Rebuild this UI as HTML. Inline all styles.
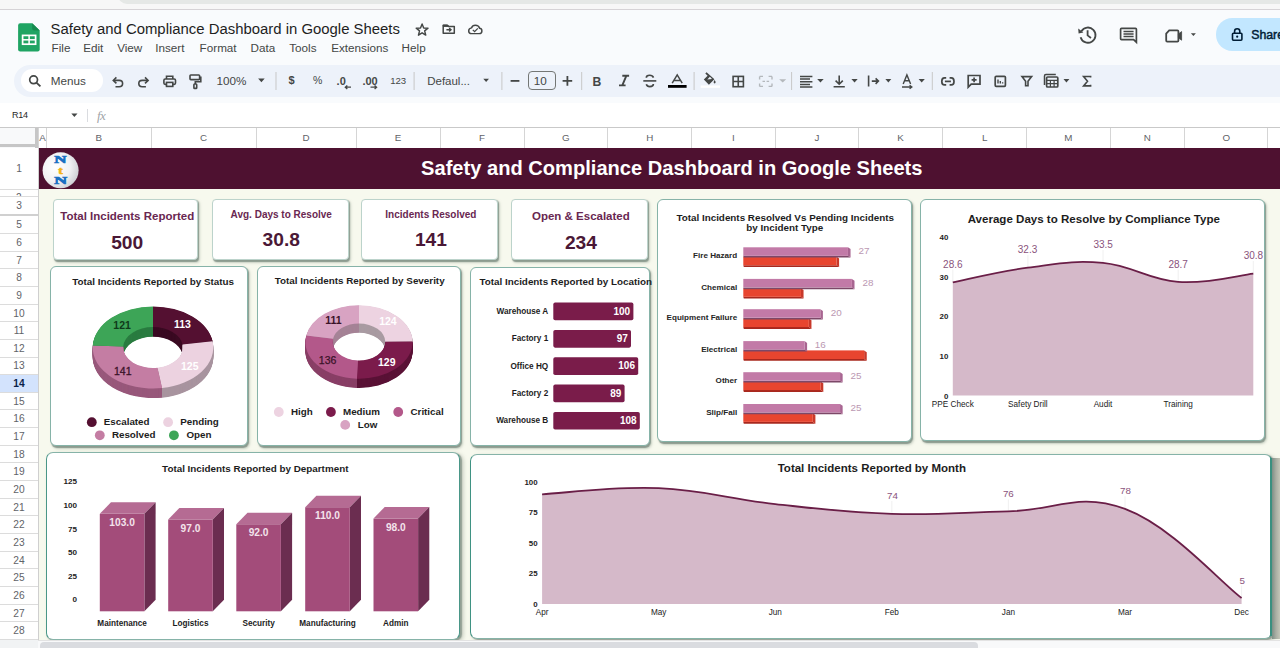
<!DOCTYPE html>
<html><head><meta charset="utf-8"><title>Safety and Compliance Dashboard</title>
<style>
*{margin:0;padding:0;box-sizing:border-box}
html,body{width:1280px;height:648px;overflow:hidden;background:#f9fbfd;font-family:"Liberation Sans",sans-serif;position:relative}
.a{position:absolute}
.t{position:absolute;white-space:nowrap;line-height:1}
</style></head><body>
<div class="a" style="left:0;top:0;width:1280px;height:9px;background:#f7f7f7"></div>
<div class="a" style="left:118px;top:-8px;width:1170px;height:11.5px;background:#e5e8e6;border-radius:0 0 0 9px"></div>
<div class="a" style="left:0;top:9px;width:1280px;height:1.2px;background:#d6d3d6"></div>
<svg class="a" style="left:17.5px;top:23px" width="22" height="29" viewBox="0 0 22 29">
 <path d="M2.2 0.3 H14.2 L21.7 7.6 V26.5 Q21.7 28.6 19.6 28.6 H2.2 Q0.1 28.6 0.1 26.5 V2.4 Q0.1 0.3 2.2 0.3Z" fill="#1fa463"/>
 <path d="M14.2 0.3 L21.7 7.6 H16.2 Q14.2 7.6 14.2 5.6Z" fill="#178a4f"/>
 <rect x="4.6" y="12.4" width="13" height="8.8" fill="none" stroke="#fff" stroke-width="1.7"/>
 <line x1="4.6" y1="16.8" x2="17.6" y2="16.8" stroke="#fff" stroke-width="1.5"/>
 <line x1="11.1" y1="12.4" x2="11.1" y2="21.2" stroke="#fff" stroke-width="1.5"/>
</svg>
<div class="t" style="left:50.60px;top:22px;font-size:14.9px;color:#1f1f1f;font-weight:normal;">Safety and Compliance Dashboard in Google Sheets</div>
<svg class="a" style="left:0;top:0" width="500" height="50" viewBox="0 0 500 50">
 <path d="M422.10 23.90 L423.69 27.92 L428.00 28.18 L424.67 30.93 L425.74 35.12 L422.10 32.80 L418.46 35.12 L419.53 30.93 L416.20 28.18 L420.51 27.92Z" fill="none" stroke="#444746" stroke-width="1.45" stroke-linejoin="round"/>
 <path d="M443.2 25.2 H447.4 L448.6 26.4 H454.3 V33.2 H443.2Z" fill="none" stroke="#444746" stroke-width="1.5" stroke-linejoin="round"/>
 <path d="M443.2 25.2 H447.4 L448.6 26.4 H443.2Z" fill="#444746" stroke="#444746" stroke-width="1"/>
 <path d="M446.4 29.7 H451 M449.2 28 L451 29.7 L449.2 31.4" fill="none" stroke="#444746" stroke-width="1.4"/>
 <path d="M471.6 33.6 H479.2 Q481.9 33.6 481.9 30.9 Q481.9 28.6 479.6 28.3 Q478.8 25.3 475.3 25.3 Q472.4 25.3 471.5 27.9 Q468.7 28.3 468.7 30.9 Q468.7 33.6 471.6 33.6Z" fill="none" stroke="#444746" stroke-width="1.45"/>
 <path d="M472.8 29.9 L474.6 31.6 L477.8 28.4" fill="none" stroke="#444746" stroke-width="1.3"/>
</svg>
<div class="t" style="left:51.60px;top:42px;font-size:11.7px;color:#444746;font-weight:normal;">File</div>
<div class="t" style="left:83.20px;top:42px;font-size:11.7px;color:#444746;font-weight:normal;">Edit</div>
<div class="t" style="left:117.20px;top:42px;font-size:11.7px;color:#444746;font-weight:normal;">View</div>
<div class="t" style="left:155.20px;top:42px;font-size:11.7px;color:#444746;font-weight:normal;">Insert</div>
<div class="t" style="left:199.60px;top:42px;font-size:11.7px;color:#444746;font-weight:normal;">Format</div>
<div class="t" style="left:250.60px;top:42px;font-size:11.7px;color:#444746;font-weight:normal;">Data</div>
<div class="t" style="left:289.20px;top:42px;font-size:11.7px;color:#444746;font-weight:normal;">Tools</div>
<div class="t" style="left:331.20px;top:42px;font-size:11.7px;color:#444746;font-weight:normal;">Extensions</div>
<div class="t" style="left:401.60px;top:42px;font-size:11.7px;color:#444746;font-weight:normal;">Help</div>
<svg class="a" style="left:1000px;top:0" width="220" height="50" viewBox="1000 0 220 50">
 <path d="M1081.4 31.2 A7.6 7.6 0 1 1 1080.6 37.2" fill="none" stroke="#444746" stroke-width="1.8"/>
 <path d="M1078.2 28.6 L1078.6 33.6 L1083.4 32.4Z" fill="#444746"/>
 <path d="M1087.6 30.2 V35.4 L1091 38" fill="none" stroke="#444746" stroke-width="1.8"/>
 <path d="M1121.5 28.4 H1135.5 Q1136.4 28.4 1136.4 29.3 V42.2 L1133.6 39.6 H1121.5 Q1120.6 39.6 1120.6 38.7 V29.3 Q1120.6 28.4 1121.5 28.4Z" fill="none" stroke="#444746" stroke-width="1.7"/>
 <path d="M1123.5 31.4 H1133.6 M1123.5 33.9 H1133.6 M1123.5 36.4 H1133.6" stroke="#444746" stroke-width="1.5"/>
 <path d="M1169.2 30.4 H1177.4 Q1178.4 30.4 1178.4 31.4 V40.6 Q1178.4 41.6 1177.4 41.6 H1167.2 Q1166.2 41.6 1166.2 40.6 V33.6Z" fill="none" stroke="#444746" stroke-width="1.8"/>
 <path d="M1178.4 34 L1181.6 31.6 V40.2 L1178.4 37.8Z" fill="#444746" stroke="#444746" stroke-width="0.8"/>
 <path d="M1190.9 33.2 H1195.9 L1193.4 35.9Z" fill="#444746"/>
</svg>
<div class="a" style="left:1215.6px;top:18.3px;width:120px;height:32.6px;background:#c2e7ff;border-radius:16.3px"></div>
<svg class="a" style="left:1229px;top:26px" width="16" height="16" viewBox="0 0 16 16">
 <rect x="3.5" y="7.2" width="9.4" height="7" rx="0.9" fill="none" stroke="#001d35" stroke-width="1.6"/>
 <path d="M5.6 7.2 V5.2 Q5.6 2.7 8.2 2.7 Q10.8 2.7 10.8 5.2 V7.2" fill="none" stroke="#001d35" stroke-width="1.6"/>
 <circle cx="8.2" cy="10.7" r="1.1" fill="#001d35"/>
</svg>
<div class="t" style="left:1251.20px;top:29px;font-size:12.3px;color:#001d35;font-weight:normal;-webkit-text-stroke:0.45px #001d35;">Share</div>
<div class="a" style="left:14.2px;top:64.8px;width:1300px;height:31.8px;background:#edf2fa;border-radius:16px"></div>
<div class="a" style="left:20.8px;top:69.2px;width:82.5px;height:22.6px;background:#fff;border-radius:11.3px"></div>
<div class="t" style="left:50.80px;top:75px;font-size:11.7px;color:#444746;font-weight:normal;">Menus</div>
<div class="t" style="left:216.60px;top:75px;font-size:11.7px;color:#444746;font-weight:normal;">100%</div>
<div class="t" style="left:427.20px;top:76px;font-size:11.5px;color:#444746;font-weight:normal;">Defaul...</div>
<div class="t" style="left:288.40px;top:75px;font-size:11px;color:#444746;font-weight:bold;">$</div>
<div class="t" style="left:313.00px;top:75px;font-size:10.5px;color:#444746;font-weight:normal;">%</div>
<div class="t" style="left:390.20px;top:76px;font-size:9.6px;color:#444746;font-weight:normal;">123</div>
<div class="t" style="left:533.80px;top:75px;font-size:11.7px;color:#444746;font-weight:normal;">10</div>
<div class="a" style="left:527.6px;top:70.9px;width:28.2px;height:19.6px;border:1.2px solid #747775;border-radius:4px"></div>
<svg class="a" style="left:0;top:60px" width="1280" height="40" viewBox="0 60 1280 40">
<g fill="none" stroke="#444746" stroke-width="1.6" stroke-linecap="butt">
 <circle cx="33.6" cy="79.8" r="3.9" stroke-width="1.7"/>
 <path d="M36.4 82.6 L40.4 86.4" stroke-width="1.9"/>
 <path d="M114 80.4 H119.2 Q122.6 80.4 122.6 83.6 Q122.6 86.8 119.2 86.8 H115.5"/>
 <path d="M116.4 77.4 L113.3 80.4 L116.4 83.4"/>
 <path d="M147.4 80.4 H142.2 Q138.8 80.4 138.8 83.6 Q138.8 86.8 142.2 86.8 H145.9"/>
 <path d="M145 77.4 L148.1 80.4 L145 83.4"/>
 <path d="M166.5 79 V76.3 H172.8 V79" />
 <rect x="163.9" y="79" width="11.6" height="5.4" rx="1.3"/>
 <rect x="166.5" y="82.4" width="6.3" height="4" fill="#edf2fa"/>
 <rect x="190" y="75" width="9.6" height="4.6" rx="0.8"/>
 <path d="M199.6 77.3 H200.8 V81.8 H195.3 V84"/>
 <rect x="193.9" y="84" width="2.8" height="4.4" rx="0.7"/>
 <path d="M258.1 78.6 H264.7 L261.4 82.3Z" fill="#444746" stroke="none"/>
 <path d="M483.3 78.8 H489 L486.15 82Z" fill="#444746" stroke="none"/>
</g>
<g stroke="#c7c7c7" stroke-width="1">
 <line x1="276" y1="72" x2="276" y2="90"/><line x1="414.1" y1="72" x2="414.1" y2="90"/>
 <line x1="501.9" y1="72" x2="501.9" y2="90"/><line x1="581.7" y1="72" x2="581.7" y2="90"/>
 <line x1="694.1" y1="72" x2="694.1" y2="90"/><line x1="791.6" y1="72" x2="791.6" y2="90"/>
 <line x1="932.3" y1="72" x2="932.3" y2="90"/>
</g>
<g fill="#444746">
 <text x="336.6" y="84.6" font-size="11" font-weight="bold" font-family="Liberation Sans">.0</text>
 <text x="362.4" y="84.6" font-size="11" font-weight="bold" font-family="Liberation Sans">.00</text>
</g>
<g fill="none" stroke="#444746" stroke-width="1.3">
 <path d="M351 87.2 H345.5 M347.3 85.4 L345.3 87.2 L347.3 89"/>
 <path d="M370.5 87.2 H376.5 M374.6 85.4 L376.6 87.2 L374.6 89"/>
</g>
<g fill="none" stroke="#444746" stroke-width="1.8">
 <path d="M510.6 80.9 H519.4"/>
 <path d="M562.6 80.9 H572.2 M567.4 76.1 V85.7"/>
</g>
<text x="592.6" y="85.6" font-size="12.2" font-weight="bold" font-family="Liberation Sans" fill="#444746">B</text>
<path d="M622.3 75.8 H629.1 M619 85.4 H625.6 M626.3 75.8 L622.3 85.4" fill="none" stroke="#444746" stroke-width="1.9"/>
<g fill="none" stroke="#444746" stroke-width="1.6">
 <path d="M643.3 80.9 H656.3"/>
 <path d="M653.5 77.6 Q652.6 75.3 649.7 75.3 Q646.3 75.3 646.3 77.8"/>
 <path d="M646.3 84.2 Q647 86.6 649.8 86.6 Q653.4 86.6 653.4 84"/>
</g>
<path d="M672.2 83.2 L677.2 74.9 L682.2 83.2 M674 80.4 H680.4" fill="none" stroke="#444746" stroke-width="1.5"/>
<rect x="668" y="85" width="18.6" height="2.8" fill="#000"/>
<g fill="#444746">
 <path d="M706.6 72.2 L705.3 73.5 L707.6 75.8 L703.8 79.6 L708.9 84.7 L714.4 79.2Z M707.3 79.4 L709.9 76.8 L712 79.1Z"/>
 <path d="M714.6 79.9 Q712.6 82.5 714.6 83.4 Q716.6 82.5 714.6 79.9Z"/>
</g>
<rect x="700.7" y="85.5" width="19.4" height="2.3" fill="#fff"/>
<g fill="none" stroke="#444746" stroke-width="1.6">
 <rect x="733.1" y="76.4" width="10.3" height="10.3"/>
 <path d="M738.25 76.4 V86.7 M733.1 81.55 H743.4"/>
</g>
<g fill="none" stroke="#b4b8bc" stroke-width="1.4">
 <path d="M759.6 76.4 V79.4 M759.6 83.4 V86.4 M772 76.4 V79.4 M772 83.4 V86.4 M759.6 76.4 H763 M768.6 76.4 H772 M759.6 86.4 H763 M768.6 86.4 H772"/>
 <path d="M762.5 81.4 H765 M766.6 81.4 H769.1"/>
</g>
<path d="M779.2 79.2 H786.2 L782.7 82.6Z" fill="#b4b8bc"/>
<g fill="none" stroke="#444746" stroke-width="1.5">
 <path d="M800 76.4 H812.4 M800 79.1 H810 M800 81.8 H812.4 M800 84.5 H810 M800 87 H812.4"/>
 <path d="M839.2 75.6 V84 M835.6 80.6 L839.2 84.2 L842.8 80.6 M833.6 86.8 H844.8" stroke-width="1.6"/>
 <path d="M868.6 75.6 V86.6 M871.8 81.1 H878.2 M875.6 78.4 L878.4 81.1 L875.6 83.8" stroke-width="1.6"/>
 <path d="M903.2 84 L906.9 74.9 L910.6 84 M904.6 80.8 H909.2 M902 87 H911.6 M909.6 85.3 L911.8 87 L909.6 88.7" stroke-width="1.4"/>
</g>
<g fill="#444746">
 <path d="M817.2 79 H823.7 L820.45 82.4Z"/>
 <path d="M851.4 79 H857.7 L854.55 82.4Z"/>
 <path d="M885.4 79 H891.3 L888.35 82.4Z"/>
 <path d="M918.6 79 H924.8 L921.7 82.4Z"/>
 <path d="M1063.5 79 H1069.4 L1066.45 82.4Z"/>
</g>
<g fill="none" stroke="#444746" stroke-width="1.7">
 <path d="M946.2 77.9 H944.5 Q941.8 77.9 941.8 81.4 Q941.8 84.9 944.5 84.9 H946.2"/>
 <path d="M949.6 77.9 H951.3 Q954 77.9 954 81.4 Q954 84.9 951.3 84.9 H949.6"/>
 <path d="M944.9 81.4 H950.9"/>
 <path d="M968.2 75.5 H980 V84.2 H971.2 L968.2 87.2Z"/>
 <path d="M974.1 77.4 V82.3 M971.6 79.85 H976.6"/>
 <rect x="995.2" y="76.3" width="10.2" height="10" rx="1"/>
 <path d="M998 79.4 V83.6 M1000.3 81 V83.6 M1002.6 82.2 V83.6" stroke-width="1.4"/>
 <path d="M1022 76.6 H1031.6 L1028 81.2 V85.8 H1025.6 V81.2Z" stroke-width="1.6"/>
 <rect x="1046.6" y="77" width="11.2" height="10" rx="1"/>
 <path d="M1044.5 85 V76 Q1044.5 74.6 1045.9 74.6 H1055.8" stroke-width="1.5"/>
 <path d="M1046.6 80.4 H1057.8 M1046.6 83.6 H1057.8 M1050.4 80.4 V87 M1054.1 80.4 V87" stroke-width="1.2"/>
 <path d="M1090.6 77.6 V76.5 H1083.6 L1087.5 81.2 L1083.6 85.9 H1090.6 V84.8" stroke-width="1.6"/>
</g>
</svg>
<div class="a" style="left:0;top:103px;width:1280px;height:24.5px;background:#fff"></div>
<div class="t" style="left:11.90px;top:111px;font-size:9.0px;color:#1f1f1f;font-weight:normal;letter-spacing:-0.2px;">R14</div>
<svg class="a" style="left:70px;top:112px" width="10" height="7"><path d="M1.3 1.6 H7.5 L4.4 5Z" fill="#444746"/></svg>
<div class="a" style="left:87px;top:109.3px;width:1px;height:13px;background:#dadce0"></div>
<div class="t" style="left:97px;top:108.5px;font-size:13px;font-family:'Liberation Serif';font-style:italic;color:#a0a4a8;letter-spacing:-0.5px">fx</div>
<div class="a" style="left:38.5px;top:147.5px;width:1242px;height:493px;background:#f7f9ee"></div>
<div class="a" style="left:38.5px;top:148px;width:1242px;height:40.5px;background:#4e1130"></div>
<svg class="a" style="left:0;top:0" width="100" height="200" viewBox="0 0 100 200">
 <defs><radialGradient id="lg" cx="0.35" cy="0.4" r="0.75"><stop offset="0" stop-color="#ffffff"/><stop offset="0.55" stop-color="#f1f2f3"/><stop offset="1" stop-color="#c4c7cb"/></radialGradient></defs>
 <circle cx="60.6" cy="170.3" r="18" fill="url(#lg)"/>
 <g transform="translate(60.3 163.4) scale(1.6 1)"><text x="0" y="0" text-anchor="middle" style="font-family:'Liberation Serif';font-weight:bold;font-size:10.6px" fill="#1a70c2" stroke="#1a70c2" stroke-width="0.7">N</text></g>
 <g transform="translate(60.6 174.2) scale(1.35 1)"><text x="0" y="0" text-anchor="middle" style="font-family:'Liberation Serif';font-weight:bold;font-size:10px" fill="#f2b418" stroke="#f2b418" stroke-width="0.6">t</text></g>
 <g transform="translate(60.6 184.4) scale(1.65 1)"><text x="0" y="0" text-anchor="middle" style="font-family:'Liberation Serif';font-weight:bold;font-size:10.8px" fill="#1a70c2" stroke="#1a70c2" stroke-width="0.7">N</text></g>
</svg>
<div class="t" style="left:421.10px;top:158px;font-size:20.1px;color:#ffffff;font-weight:bold;">Safety and Compliance Dashboard in Google Sheets</div>
<div class="a" style="left:52.60px;top:199.00px;width:145.20px;height:61.20px;background:#fff;border:1px solid #bcd3cb;border-radius:4px;box-shadow:1px 1.5px 1px rgba(95,115,105,.6), 2px 2.5px 2.5px rgba(130,145,130,.35)"></div>
<div class="t" style="left:-72.80px;width:400px;text-align:center;top:211px;font-size:11.5px;color:#692751;font-weight:bold;">Total Incidents Reported</div>
<div class="t" style="left:-72.80px;width:400px;text-align:center;top:233px;font-size:19.2px;color:#4a1836;font-weight:bold;">500</div>
<div class="a" style="left:212.00px;top:199.00px;width:136.50px;height:61.20px;background:#fff;border:1px solid #bcd3cb;border-radius:4px;box-shadow:1px 1.5px 1px rgba(95,115,105,.6), 2px 2.5px 2.5px rgba(130,145,130,.35)"></div>
<div class="t" style="left:81.25px;width:400px;text-align:center;top:210px;font-size:10.0px;color:#692751;font-weight:bold;">Avg. Days to Resolve</div>
<div class="t" style="left:81.25px;width:400px;text-align:center;top:230px;font-size:19.2px;color:#4a1836;font-weight:bold;">30.8</div>
<div class="a" style="left:361.30px;top:199.00px;width:137.20px;height:61.20px;background:#fff;border:1px solid #bcd3cb;border-radius:4px;box-shadow:1px 1.5px 1px rgba(95,115,105,.6), 2px 2.5px 2.5px rgba(130,145,130,.35)"></div>
<div class="t" style="left:230.90px;width:400px;text-align:center;top:210px;font-size:10.0px;color:#692751;font-weight:bold;">Incidents Resolved</div>
<div class="t" style="left:230.90px;width:400px;text-align:center;top:230px;font-size:19.2px;color:#4a1836;font-weight:bold;">141</div>
<div class="a" style="left:511.30px;top:199.00px;width:137.20px;height:61.20px;background:#fff;border:1px solid #bcd3cb;border-radius:4px;box-shadow:1px 1.5px 1px rgba(95,115,105,.6), 2px 2.5px 2.5px rgba(130,145,130,.35)"></div>
<div class="t" style="left:380.90px;width:400px;text-align:center;top:211px;font-size:11.5px;color:#692751;font-weight:bold;">Open &amp; Escalated</div>
<div class="t" style="left:380.90px;width:400px;text-align:center;top:233px;font-size:19.2px;color:#4a1836;font-weight:bold;">234</div>
<div class="a" style="left:50.40px;top:266.10px;width:198.00px;height:179.90px;background:#fff;border:1px solid #86b3a8;border-radius:6px;box-shadow:1px 1.5px 1px rgba(95,115,105,.6), 2px 2.5px 2.5px rgba(130,145,130,.35)"></div>
<div class="a" style="left:256.50px;top:265.90px;width:204.50px;height:180.10px;background:#fff;border:1px solid #86b3a8;border-radius:6px;box-shadow:1px 1.5px 1px rgba(95,115,105,.6), 2px 2.5px 2.5px rgba(130,145,130,.35)"></div>
<div class="a" style="left:469.80px;top:266.50px;width:180.70px;height:179.50px;background:#fff;border:1px solid #86b3a8;border-radius:6px;box-shadow:1px 1.5px 1px rgba(95,115,105,.6), 2px 2.5px 2.5px rgba(130,145,130,.35)"></div>
<div class="a" style="left:656.60px;top:199.30px;width:255.00px;height:242.50px;background:#fff;border:1px solid #86b3a8;border-radius:6px;box-shadow:1px 1.5px 1px rgba(95,115,105,.6), 2px 2.5px 2.5px rgba(130,145,130,.35)"></div>
<div class="a" style="left:919.80px;top:199.30px;width:345.20px;height:242.00px;background:#fff;border:1px solid #86b3a8;border-radius:6px;box-shadow:1px 1.5px 1px rgba(95,115,105,.6), 2px 2.5px 2.5px rgba(130,145,130,.35)"></div>
<div class="a" style="left:46.20px;top:452.30px;width:414.10px;height:187.40px;background:#fff;border:1px solid #86b3a8;border-left:1.6px solid #4a9788;border-right:1.6px solid #4a9788;border-radius:7px;box-shadow:1.5px 1px 1px rgba(95,115,105,.5), 3px 2px 4px rgba(120,130,115,.45)"></div>
<div class="a" style="left:469.60px;top:454.40px;width:802.90px;height:184.90px;background:#fff;border:1px solid #86b3a8;border-left:1.6px solid #3f9283;border-right:1.6px solid #3f9283;border-radius:7px;box-shadow:1.5px 1px 1px rgba(95,115,105,.5), 3px 2px 4px rgba(120,130,115,.45)"></div>
<div class="a" style="left:1272.3px;top:458px;width:8px;height:181px;background:linear-gradient(90deg,#7f8f86,#a9aea3 50%,#c4c6b8)"></div>
<div class="a" style="left:1269.8px;top:458px;width:2.6px;height:178px;background:#3a9080"></div>
<div class="a" style="left:0;top:127.3px;width:1280px;height:20.5px;background:#fff;border-top:1px solid #c9c9c9"></div>
<div class="a" style="left:38.00px;top:128px;width:1px;height:19.5px;background:#d5d5d5"></div>
<div class="t" style="left:-157.50px;width:400px;text-align:center;top:133px;font-size:9.8px;color:#5f6368;font-weight:normal;">A</div>
<div class="a" style="left:46.00px;top:128px;width:1px;height:19.5px;background:#d5d5d5"></div>
<div class="t" style="left:-101.25px;width:400px;text-align:center;top:133px;font-size:9.8px;color:#5f6368;font-weight:normal;">B</div>
<div class="a" style="left:150.50px;top:128px;width:1px;height:19.5px;background:#d5d5d5"></div>
<div class="t" style="left:3.50px;width:400px;text-align:center;top:133px;font-size:9.8px;color:#5f6368;font-weight:normal;">C</div>
<div class="a" style="left:255.50px;top:128px;width:1px;height:19.5px;background:#d5d5d5"></div>
<div class="t" style="left:106.12px;width:400px;text-align:center;top:133px;font-size:9.8px;color:#5f6368;font-weight:normal;">D</div>
<div class="a" style="left:355.75px;top:128px;width:1px;height:19.5px;background:#d5d5d5"></div>
<div class="t" style="left:198.12px;width:400px;text-align:center;top:133px;font-size:9.8px;color:#5f6368;font-weight:normal;">E</div>
<div class="a" style="left:439.50px;top:128px;width:1px;height:19.5px;background:#d5d5d5"></div>
<div class="t" style="left:282.00px;width:400px;text-align:center;top:133px;font-size:9.8px;color:#5f6368;font-weight:normal;">F</div>
<div class="a" style="left:523.50px;top:128px;width:1px;height:19.5px;background:#d5d5d5"></div>
<div class="t" style="left:365.88px;width:400px;text-align:center;top:133px;font-size:9.8px;color:#5f6368;font-weight:normal;">G</div>
<div class="a" style="left:607.25px;top:128px;width:1px;height:19.5px;background:#d5d5d5"></div>
<div class="t" style="left:449.75px;width:400px;text-align:center;top:133px;font-size:9.8px;color:#5f6368;font-weight:normal;">H</div>
<div class="a" style="left:691.25px;top:128px;width:1px;height:19.5px;background:#d5d5d5"></div>
<div class="t" style="left:533.38px;width:400px;text-align:center;top:133px;font-size:9.8px;color:#5f6368;font-weight:normal;">I</div>
<div class="a" style="left:774.50px;top:128px;width:1px;height:19.5px;background:#d5d5d5"></div>
<div class="t" style="left:616.88px;width:400px;text-align:center;top:133px;font-size:9.8px;color:#5f6368;font-weight:normal;">J</div>
<div class="a" style="left:858.25px;top:128px;width:1px;height:19.5px;background:#d5d5d5"></div>
<div class="t" style="left:700.62px;width:400px;text-align:center;top:133px;font-size:9.8px;color:#5f6368;font-weight:normal;">K</div>
<div class="a" style="left:942.00px;top:128px;width:1px;height:19.5px;background:#d5d5d5"></div>
<div class="t" style="left:784.62px;width:400px;text-align:center;top:133px;font-size:9.8px;color:#5f6368;font-weight:normal;">L</div>
<div class="a" style="left:1026.25px;top:128px;width:1px;height:19.5px;background:#d5d5d5"></div>
<div class="t" style="left:868.42px;width:400px;text-align:center;top:133px;font-size:9.8px;color:#5f6368;font-weight:normal;">M</div>
<div class="a" style="left:1109.60px;top:128px;width:1px;height:19.5px;background:#d5d5d5"></div>
<div class="t" style="left:947.30px;width:400px;text-align:center;top:133px;font-size:9.8px;color:#5f6368;font-weight:normal;">N</div>
<div class="a" style="left:1184.00px;top:128px;width:1px;height:19.5px;background:#d5d5d5"></div>
<div class="t" style="left:1026.20px;width:400px;text-align:center;top:133px;font-size:9.8px;color:#5f6368;font-weight:normal;">O</div>
<div class="a" style="left:1267.40px;top:128px;width:1px;height:19.5px;background:#d5d5d5"></div>
<div class="t" style="left:1109.70px;width:400px;text-align:center;top:133px;font-size:9.8px;color:#5f6368;font-weight:normal;">P</div>
<div class="a" style="left:0;top:128px;width:38px;height:19.5px;background:#f8f9fa"></div>
<div class="a" style="left:34.5px;top:128px;width:3.5px;height:20px;background:#c6c6c6"></div>
<div class="a" style="left:0;top:143.8px;width:38px;height:3.5px;background:#c6c6c6"></div>
<div class="a" style="left:0;top:147.5px;width:38px;height:493px;background:#fff"></div>
<div class="a" style="left:37.5px;top:147.5px;width:1px;height:493px;background:#cfcfcf"></div>
<div class="a" style="left:0;top:189.00px;width:37.5px;height:1px;background:#dcdcdc"></div>
<div class="t" style="left:-181.00px;width:400px;text-align:center;top:164px;font-size:10.2px;color:#5f6368;font-weight:normal;">1</div>
<div class="a" style="left:0;top:195.90px;width:37.5px;height:1px;background:#dcdcdc"></div>
<div class="a" style="left:0;top:189.50px;width:37.5px;height:6.90px;overflow:hidden"><div class="t" style="left:0;width:37.5px;text-align:center;top:3px;font-size:10px;color:#5f6368">2</div></div>
<div class="a" style="left:0;top:213.70px;width:37.5px;height:1px;background:#dcdcdc"></div>
<div class="t" style="left:-181.00px;width:400px;text-align:center;top:201px;font-size:10.2px;color:#5f6368;font-weight:normal;">3</div>
<div class="a" style="left:0;top:232.95px;width:37.5px;height:1px;background:#dcdcdc"></div>
<div class="t" style="left:-181.00px;width:400px;text-align:center;top:220px;font-size:10.2px;color:#5f6368;font-weight:normal;">5</div>
<div class="a" style="left:0;top:250.60px;width:37.5px;height:1px;background:#dcdcdc"></div>
<div class="t" style="left:-181.00px;width:400px;text-align:center;top:238px;font-size:10.2px;color:#5f6368;font-weight:normal;">6</div>
<div class="a" style="left:0;top:268.25px;width:37.5px;height:1px;background:#dcdcdc"></div>
<div class="t" style="left:-181.00px;width:400px;text-align:center;top:256px;font-size:10.2px;color:#5f6368;font-weight:normal;">7</div>
<div class="a" style="left:0;top:285.90px;width:37.5px;height:1px;background:#dcdcdc"></div>
<div class="t" style="left:-181.00px;width:400px;text-align:center;top:273px;font-size:10.2px;color:#5f6368;font-weight:normal;">8</div>
<div class="a" style="left:0;top:303.55px;width:37.5px;height:1px;background:#dcdcdc"></div>
<div class="t" style="left:-181.00px;width:400px;text-align:center;top:291px;font-size:10.2px;color:#5f6368;font-weight:normal;">9</div>
<div class="a" style="left:0;top:321.20px;width:37.5px;height:1px;background:#dcdcdc"></div>
<div class="t" style="left:-181.00px;width:400px;text-align:center;top:309px;font-size:10.2px;color:#5f6368;font-weight:normal;">10</div>
<div class="a" style="left:0;top:338.85px;width:37.5px;height:1px;background:#dcdcdc"></div>
<div class="t" style="left:-181.00px;width:400px;text-align:center;top:326px;font-size:10.2px;color:#5f6368;font-weight:normal;">11</div>
<div class="a" style="left:0;top:356.50px;width:37.5px;height:1px;background:#dcdcdc"></div>
<div class="t" style="left:-181.00px;width:400px;text-align:center;top:344px;font-size:10.2px;color:#5f6368;font-weight:normal;">12</div>
<div class="a" style="left:0;top:374.15px;width:37.5px;height:1px;background:#dcdcdc"></div>
<div class="t" style="left:-181.00px;width:400px;text-align:center;top:361px;font-size:10.2px;color:#5f6368;font-weight:normal;">13</div>
<div class="a" style="left:0;top:374.65px;width:37.5px;height:17.65px;background:#d3e3fd"></div>
<div class="a" style="left:0;top:391.80px;width:37.5px;height:1px;background:#dcdcdc"></div>
<div class="t" style="left:-181.00px;width:400px;text-align:center;top:379px;font-size:10.2px;color:#0b1f4a;font-weight:bold;">14</div>
<div class="a" style="left:0;top:409.45px;width:37.5px;height:1px;background:#dcdcdc"></div>
<div class="t" style="left:-181.00px;width:400px;text-align:center;top:397px;font-size:10.2px;color:#5f6368;font-weight:normal;">15</div>
<div class="a" style="left:0;top:427.10px;width:37.5px;height:1px;background:#dcdcdc"></div>
<div class="t" style="left:-181.00px;width:400px;text-align:center;top:414px;font-size:10.2px;color:#5f6368;font-weight:normal;">16</div>
<div class="a" style="left:0;top:444.75px;width:37.5px;height:1px;background:#dcdcdc"></div>
<div class="t" style="left:-181.00px;width:400px;text-align:center;top:432px;font-size:10.2px;color:#5f6368;font-weight:normal;">17</div>
<div class="a" style="left:0;top:462.40px;width:37.5px;height:1px;background:#dcdcdc"></div>
<div class="t" style="left:-181.00px;width:400px;text-align:center;top:450px;font-size:10.2px;color:#5f6368;font-weight:normal;">18</div>
<div class="a" style="left:0;top:480.05px;width:37.5px;height:1px;background:#dcdcdc"></div>
<div class="t" style="left:-181.00px;width:400px;text-align:center;top:467px;font-size:10.2px;color:#5f6368;font-weight:normal;">19</div>
<div class="a" style="left:0;top:497.70px;width:37.5px;height:1px;background:#dcdcdc"></div>
<div class="t" style="left:-181.00px;width:400px;text-align:center;top:485px;font-size:10.2px;color:#5f6368;font-weight:normal;">20</div>
<div class="a" style="left:0;top:515.35px;width:37.5px;height:1px;background:#dcdcdc"></div>
<div class="t" style="left:-181.00px;width:400px;text-align:center;top:503px;font-size:10.2px;color:#5f6368;font-weight:normal;">21</div>
<div class="a" style="left:0;top:533.00px;width:37.5px;height:1px;background:#dcdcdc"></div>
<div class="t" style="left:-181.00px;width:400px;text-align:center;top:520px;font-size:10.2px;color:#5f6368;font-weight:normal;">22</div>
<div class="a" style="left:0;top:550.65px;width:37.5px;height:1px;background:#dcdcdc"></div>
<div class="t" style="left:-181.00px;width:400px;text-align:center;top:538px;font-size:10.2px;color:#5f6368;font-weight:normal;">23</div>
<div class="a" style="left:0;top:568.30px;width:37.5px;height:1px;background:#dcdcdc"></div>
<div class="t" style="left:-181.00px;width:400px;text-align:center;top:556px;font-size:10.2px;color:#5f6368;font-weight:normal;">24</div>
<div class="a" style="left:0;top:585.95px;width:37.5px;height:1px;background:#dcdcdc"></div>
<div class="t" style="left:-181.00px;width:400px;text-align:center;top:573px;font-size:10.2px;color:#5f6368;font-weight:normal;">25</div>
<div class="a" style="left:0;top:603.60px;width:37.5px;height:1px;background:#dcdcdc"></div>
<div class="t" style="left:-181.00px;width:400px;text-align:center;top:591px;font-size:10.2px;color:#5f6368;font-weight:normal;">26</div>
<div class="a" style="left:0;top:621.25px;width:37.5px;height:1px;background:#dcdcdc"></div>
<div class="t" style="left:-181.00px;width:400px;text-align:center;top:609px;font-size:10.2px;color:#5f6368;font-weight:normal;">27</div>
<div class="a" style="left:0;top:638.90px;width:37.5px;height:1px;background:#dcdcdc"></div>
<div class="t" style="left:-181.00px;width:400px;text-align:center;top:626px;font-size:10.2px;color:#5f6368;font-weight:normal;">28</div>
<div class="a" style="left:0;top:213.6px;width:37.5px;height:2.2px;background:#d0d0d0"></div>
<div class="t" style="left:72.30px;top:277px;font-size:9.85px;color:#1d1d1d;font-weight:bold;">Total Incidents Reported by Status</div>
<svg class="a" style="left:0;top:0" width="1280" height="648" viewBox="0 0 1280 648"><path d="M153.00 316.10 A60.3 41 0 0 1 212.62 350.94 L182.46 354.04 A29.8 20.4 0 0 0 153.00 336.70Z" fill="#3a0a22"/><path d="M212.62 350.94 A60.3 41 0 0 1 162.06 397.63 L157.48 377.27 A29.8 20.4 0 0 0 182.46 354.04Z" fill="#a8949f"/><path d="M162.06 397.63 A60.3 41 0 0 1 92.78 355.04 L123.24 356.08 A29.8 20.4 0 0 0 157.48 377.27Z" fill="#98587b"/><path d="M92.78 355.04 A60.3 41 0 0 1 153.00 316.10 L153.00 336.70 A29.8 20.4 0 0 0 123.24 356.08Z" fill="#2a7c40"/><path d="M153.00 315.59 A60.3 41 0 0 1 212.62 350.44 L182.46 353.53 A29.8 20.4 0 0 0 153.00 336.19Z" fill="#3a0a22"/><path d="M212.62 350.44 A60.3 41 0 0 1 162.06 397.13 L157.48 376.76 A29.8 20.4 0 0 0 182.46 353.53Z" fill="#a8949f"/><path d="M162.06 397.13 A60.3 41 0 0 1 92.78 354.53 L123.24 355.57 A29.8 20.4 0 0 0 157.48 376.76Z" fill="#98587b"/><path d="M92.78 354.53 A60.3 41 0 0 1 153.00 315.59 L153.00 336.19 A29.8 20.4 0 0 0 123.24 355.57Z" fill="#2a7c40"/><path d="M153.00 315.09 A60.3 41 0 0 1 212.62 349.93 L182.46 353.02 A29.8 20.4 0 0 0 153.00 335.69Z" fill="#3a0a22"/><path d="M212.62 349.93 A60.3 41 0 0 1 162.06 396.62 L157.48 376.26 A29.8 20.4 0 0 0 182.46 353.02Z" fill="#a8949f"/><path d="M162.06 396.62 A60.3 41 0 0 1 92.78 354.03 L123.24 355.06 A29.8 20.4 0 0 0 157.48 376.26Z" fill="#98587b"/><path d="M92.78 354.03 A60.3 41 0 0 1 153.00 315.09 L153.00 335.69 A29.8 20.4 0 0 0 123.24 355.06Z" fill="#2a7c40"/><path d="M153.00 314.58 A60.3 41 0 0 1 212.62 349.42 L182.46 352.52 A29.8 20.4 0 0 0 153.00 335.18Z" fill="#3a0a22"/><path d="M212.62 349.42 A60.3 41 0 0 1 162.06 396.12 L157.48 375.75 A29.8 20.4 0 0 0 182.46 352.52Z" fill="#a8949f"/><path d="M162.06 396.12 A60.3 41 0 0 1 92.78 353.52 L123.24 354.56 A29.8 20.4 0 0 0 157.48 375.75Z" fill="#98587b"/><path d="M92.78 353.52 A60.3 41 0 0 1 153.00 314.58 L153.00 335.18 A29.8 20.4 0 0 0 123.24 354.56Z" fill="#2a7c40"/><path d="M153.00 314.08 A60.3 41 0 0 1 212.62 348.92 L182.46 352.01 A29.8 20.4 0 0 0 153.00 334.68Z" fill="#3a0a22"/><path d="M212.62 348.92 A60.3 41 0 0 1 162.06 395.61 L157.48 375.25 A29.8 20.4 0 0 0 182.46 352.01Z" fill="#a8949f"/><path d="M162.06 395.61 A60.3 41 0 0 1 92.78 353.02 L123.24 354.05 A29.8 20.4 0 0 0 157.48 375.25Z" fill="#98587b"/><path d="M92.78 353.02 A60.3 41 0 0 1 153.00 314.08 L153.00 334.68 A29.8 20.4 0 0 0 123.24 354.05Z" fill="#2a7c40"/><path d="M153.00 313.57 A60.3 41 0 0 1 212.62 348.41 L182.46 351.51 A29.8 20.4 0 0 0 153.00 334.17Z" fill="#3a0a22"/><path d="M212.62 348.41 A60.3 41 0 0 1 162.06 395.11 L157.48 374.74 A29.8 20.4 0 0 0 182.46 351.51Z" fill="#a8949f"/><path d="M162.06 395.11 A60.3 41 0 0 1 92.78 352.51 L123.24 353.55 A29.8 20.4 0 0 0 157.48 374.74Z" fill="#98587b"/><path d="M92.78 352.51 A60.3 41 0 0 1 153.00 313.57 L153.00 334.17 A29.8 20.4 0 0 0 123.24 353.55Z" fill="#2a7c40"/><path d="M153.00 313.07 A60.3 41 0 0 1 212.62 347.91 L182.46 351.00 A29.8 20.4 0 0 0 153.00 333.67Z" fill="#3a0a22"/><path d="M212.62 347.91 A60.3 41 0 0 1 162.06 394.60 L157.48 374.24 A29.8 20.4 0 0 0 182.46 351.00Z" fill="#a8949f"/><path d="M162.06 394.60 A60.3 41 0 0 1 92.78 352.01 L123.24 353.04 A29.8 20.4 0 0 0 157.48 374.24Z" fill="#98587b"/><path d="M92.78 352.01 A60.3 41 0 0 1 153.00 313.07 L153.00 333.67 A29.8 20.4 0 0 0 123.24 353.04Z" fill="#2a7c40"/><path d="M153.00 312.56 A60.3 41 0 0 1 212.62 347.40 L182.46 350.50 A29.8 20.4 0 0 0 153.00 333.16Z" fill="#3a0a22"/><path d="M212.62 347.40 A60.3 41 0 0 1 162.06 394.10 L157.48 373.73 A29.8 20.4 0 0 0 182.46 350.50Z" fill="#a8949f"/><path d="M162.06 394.10 A60.3 41 0 0 1 92.78 351.50 L123.24 352.54 A29.8 20.4 0 0 0 157.48 373.73Z" fill="#98587b"/><path d="M92.78 351.50 A60.3 41 0 0 1 153.00 312.56 L153.00 333.16 A29.8 20.4 0 0 0 123.24 352.54Z" fill="#2a7c40"/><path d="M153.00 312.06 A60.3 41 0 0 1 212.62 346.90 L182.46 349.99 A29.8 20.4 0 0 0 153.00 332.66Z" fill="#3a0a22"/><path d="M212.62 346.90 A60.3 41 0 0 1 162.06 393.59 L157.48 373.23 A29.8 20.4 0 0 0 182.46 349.99Z" fill="#a8949f"/><path d="M162.06 393.59 A60.3 41 0 0 1 92.78 351.00 L123.24 352.03 A29.8 20.4 0 0 0 157.48 373.23Z" fill="#98587b"/><path d="M92.78 351.00 A60.3 41 0 0 1 153.00 312.06 L153.00 332.66 A29.8 20.4 0 0 0 123.24 352.03Z" fill="#2a7c40"/><path d="M153.00 311.55 A60.3 41 0 0 1 212.62 346.39 L182.46 349.49 A29.8 20.4 0 0 0 153.00 332.15Z" fill="#3a0a22"/><path d="M212.62 346.39 A60.3 41 0 0 1 162.06 393.09 L157.48 372.72 A29.8 20.4 0 0 0 182.46 349.49Z" fill="#a8949f"/><path d="M162.06 393.09 A60.3 41 0 0 1 92.78 350.49 L123.24 351.53 A29.8 20.4 0 0 0 157.48 372.72Z" fill="#98587b"/><path d="M92.78 350.49 A60.3 41 0 0 1 153.00 311.55 L153.00 332.15 A29.8 20.4 0 0 0 123.24 351.53Z" fill="#2a7c40"/><path d="M153.00 311.05 A60.3 41 0 0 1 212.62 345.89 L182.46 348.98 A29.8 20.4 0 0 0 153.00 331.65Z" fill="#3a0a22"/><path d="M212.62 345.89 A60.3 41 0 0 1 162.06 392.58 L157.48 372.22 A29.8 20.4 0 0 0 182.46 348.98Z" fill="#a8949f"/><path d="M162.06 392.58 A60.3 41 0 0 1 92.78 349.99 L123.24 351.02 A29.8 20.4 0 0 0 157.48 372.22Z" fill="#98587b"/><path d="M92.78 349.99 A60.3 41 0 0 1 153.00 311.05 L153.00 331.65 A29.8 20.4 0 0 0 123.24 351.02Z" fill="#2a7c40"/><path d="M153.00 310.54 A60.3 41 0 0 1 212.62 345.38 L182.46 348.48 A29.8 20.4 0 0 0 153.00 331.14Z" fill="#3a0a22"/><path d="M212.62 345.38 A60.3 41 0 0 1 162.06 392.08 L157.48 371.71 A29.8 20.4 0 0 0 182.46 348.48Z" fill="#a8949f"/><path d="M162.06 392.08 A60.3 41 0 0 1 92.78 349.48 L123.24 350.52 A29.8 20.4 0 0 0 157.48 371.71Z" fill="#98587b"/><path d="M92.78 349.48 A60.3 41 0 0 1 153.00 310.54 L153.00 331.14 A29.8 20.4 0 0 0 123.24 350.52Z" fill="#2a7c40"/><path d="M153.00 310.04 A60.3 41 0 0 1 212.62 344.88 L182.46 347.97 A29.8 20.4 0 0 0 153.00 330.64Z" fill="#3a0a22"/><path d="M212.62 344.88 A60.3 41 0 0 1 162.06 391.57 L157.48 371.21 A29.8 20.4 0 0 0 182.46 347.97Z" fill="#a8949f"/><path d="M162.06 391.57 A60.3 41 0 0 1 92.78 348.98 L123.24 350.01 A29.8 20.4 0 0 0 157.48 371.21Z" fill="#98587b"/><path d="M92.78 348.98 A60.3 41 0 0 1 153.00 310.04 L153.00 330.64 A29.8 20.4 0 0 0 123.24 350.01Z" fill="#2a7c40"/><path d="M153.00 309.53 A60.3 41 0 0 1 212.62 344.37 L182.46 347.47 A29.8 20.4 0 0 0 153.00 330.13Z" fill="#3a0a22"/><path d="M212.62 344.37 A60.3 41 0 0 1 162.06 391.07 L157.48 370.70 A29.8 20.4 0 0 0 182.46 347.47Z" fill="#a8949f"/><path d="M162.06 391.07 A60.3 41 0 0 1 92.78 348.47 L123.24 349.51 A29.8 20.4 0 0 0 157.48 370.70Z" fill="#98587b"/><path d="M92.78 348.47 A60.3 41 0 0 1 153.00 309.53 L153.00 330.13 A29.8 20.4 0 0 0 123.24 349.51Z" fill="#2a7c40"/><path d="M153.00 309.03 A60.3 41 0 0 1 212.62 343.87 L182.46 346.96 A29.8 20.4 0 0 0 153.00 329.63Z" fill="#3a0a22"/><path d="M212.62 343.87 A60.3 41 0 0 1 162.06 390.56 L157.48 370.19 A29.8 20.4 0 0 0 182.46 346.96Z" fill="#a8949f"/><path d="M162.06 390.56 A60.3 41 0 0 1 92.78 347.97 L123.24 349.00 A29.8 20.4 0 0 0 157.48 370.19Z" fill="#98587b"/><path d="M92.78 347.97 A60.3 41 0 0 1 153.00 309.03 L153.00 329.63 A29.8 20.4 0 0 0 123.24 349.00Z" fill="#2a7c40"/><path d="M153.00 308.52 A60.3 41 0 0 1 212.62 343.36 L182.46 346.46 A29.8 20.4 0 0 0 153.00 329.12Z" fill="#3a0a22"/><path d="M212.62 343.36 A60.3 41 0 0 1 162.06 390.06 L157.48 369.69 A29.8 20.4 0 0 0 182.46 346.46Z" fill="#a8949f"/><path d="M162.06 390.06 A60.3 41 0 0 1 92.78 347.46 L123.24 348.50 A29.8 20.4 0 0 0 157.48 369.69Z" fill="#98587b"/><path d="M92.78 347.46 A60.3 41 0 0 1 153.00 308.52 L153.00 329.12 A29.8 20.4 0 0 0 123.24 348.50Z" fill="#2a7c40"/><path d="M153.00 308.02 A60.3 41 0 0 1 212.62 342.86 L182.46 345.95 A29.8 20.4 0 0 0 153.00 328.62Z" fill="#3a0a22"/><path d="M212.62 342.86 A60.3 41 0 0 1 162.06 389.55 L157.48 369.18 A29.8 20.4 0 0 0 182.46 345.95Z" fill="#a8949f"/><path d="M162.06 389.55 A60.3 41 0 0 1 92.78 346.96 L123.24 347.99 A29.8 20.4 0 0 0 157.48 369.18Z" fill="#98587b"/><path d="M92.78 346.96 A60.3 41 0 0 1 153.00 308.02 L153.00 328.62 A29.8 20.4 0 0 0 123.24 347.99Z" fill="#2a7c40"/><path d="M153.00 307.51 A60.3 41 0 0 1 212.62 342.35 L182.46 345.45 A29.8 20.4 0 0 0 153.00 328.11Z" fill="#3a0a22"/><path d="M212.62 342.35 A60.3 41 0 0 1 162.06 389.05 L157.48 368.68 A29.8 20.4 0 0 0 182.46 345.45Z" fill="#a8949f"/><path d="M162.06 389.05 A60.3 41 0 0 1 92.78 346.45 L123.24 347.49 A29.8 20.4 0 0 0 157.48 368.68Z" fill="#98587b"/><path d="M92.78 346.45 A60.3 41 0 0 1 153.00 307.51 L153.00 328.11 A29.8 20.4 0 0 0 123.24 347.49Z" fill="#2a7c40"/><path d="M153.00 307.01 A60.3 41 0 0 1 212.62 341.85 L182.46 344.94 A29.8 20.4 0 0 0 153.00 327.61Z" fill="#3a0a22"/><path d="M212.62 341.85 A60.3 41 0 0 1 162.06 388.54 L157.48 368.17 A29.8 20.4 0 0 0 182.46 344.94Z" fill="#a8949f"/><path d="M162.06 388.54 A60.3 41 0 0 1 92.78 345.95 L123.24 346.98 A29.8 20.4 0 0 0 157.48 368.17Z" fill="#98587b"/><path d="M92.78 345.95 A60.3 41 0 0 1 153.00 307.01 L153.00 327.61 A29.8 20.4 0 0 0 123.24 346.98Z" fill="#2a7c40"/><path d="M153.00 306.50 A60.3 41 0 0 1 212.62 341.34 L182.46 344.44 A29.8 20.4 0 0 0 153.00 327.10Z" fill="#541031"/><path d="M212.62 341.34 A60.3 41 0 0 1 162.06 388.03 L157.48 367.67 A29.8 20.4 0 0 0 182.46 344.44Z" fill="#ecd2e0"/><path d="M162.06 388.03 A60.3 41 0 0 1 92.78 345.44 L123.24 346.48 A29.8 20.4 0 0 0 157.48 367.67Z" fill="#c47da3"/><path d="M92.78 345.44 A60.3 41 0 0 1 153.00 306.50 L153.00 327.10 A29.8 20.4 0 0 0 123.24 346.48Z" fill="#3da557"/></svg>
<div class="t" style="left:174.00px;top:319px;font-size:10.5px;color:#ffffff;font-weight:bold;">113</div>
<div class="t" style="left:113.30px;top:320px;font-size:10.5px;color:#0f3a1a;font-weight:bold;">121</div>
<div class="t" style="left:114.00px;top:366px;font-size:10.5px;color:#3a1228;font-weight:normal;-webkit-text-stroke:0.3px #3a1228;">141</div>
<div class="t" style="left:181.00px;top:361px;font-size:10.5px;color:#ffffff;font-weight:bold;">125</div>
<svg class="a" style="left:0;top:0" width="1280" height="648" viewBox="0 0 1280 648"><circle cx="91.8" cy="422.2" r="4.9" fill="#541031"/><circle cx="168.1" cy="422.2" r="4.9" fill="#ecd2e0"/><circle cx="99.8" cy="435.3" r="4.9" fill="#c47da3"/><circle cx="173.9" cy="435.3" r="4.9" fill="#3da557"/></svg>
<div class="t" style="left:103.80px;top:417px;font-size:9.8px;color:#1d1d1d;font-weight:bold;">Escalated</div>
<div class="t" style="left:180.20px;top:417px;font-size:9.8px;color:#1d1d1d;font-weight:bold;">Pending</div>
<div class="t" style="left:111.90px;top:430px;font-size:9.8px;color:#1d1d1d;font-weight:bold;">Resolved</div>
<div class="t" style="left:186.40px;top:430px;font-size:9.8px;color:#1d1d1d;font-weight:bold;">Open</div>
<div class="t" style="left:274.70px;top:276px;font-size:9.85px;color:#1d1d1d;font-weight:bold;">Total Incidents Reported by Severity</div>
<svg class="a" style="left:0;top:0" width="1280" height="648" viewBox="0 0 1280 648"><path d="M359.00 314.60 A53.6 36.7 0 0 1 412.60 350.84 L385.30 351.07 A26.3 18.5 0 0 0 359.00 332.80Z" fill="#a99ba2"/><path d="M412.60 350.84 A53.6 36.7 0 0 1 356.98 387.97 L358.01 369.79 A26.3 18.5 0 0 0 385.30 351.07Z" fill="#5a1236"/><path d="M356.98 387.97 A53.6 36.7 0 0 1 306.23 344.88 L333.11 348.06 A26.3 18.5 0 0 0 358.01 369.79Z" fill="#893f66"/><path d="M306.23 344.88 A53.6 36.7 0 0 1 359.00 314.60 L359.00 332.80 A26.3 18.5 0 0 0 333.11 348.06Z" fill="#a58396"/><path d="M359.00 314.08 A53.6 36.7 0 0 1 412.60 350.32 L385.30 350.55 A26.3 18.5 0 0 0 359.00 332.28Z" fill="#a99ba2"/><path d="M412.60 350.32 A53.6 36.7 0 0 1 356.98 387.46 L358.01 369.27 A26.3 18.5 0 0 0 385.30 350.55Z" fill="#5a1236"/><path d="M356.98 387.46 A53.6 36.7 0 0 1 306.23 344.36 L333.11 347.55 A26.3 18.5 0 0 0 358.01 369.27Z" fill="#893f66"/><path d="M306.23 344.36 A53.6 36.7 0 0 1 359.00 314.08 L359.00 332.28 A26.3 18.5 0 0 0 333.11 347.55Z" fill="#a58396"/><path d="M359.00 313.57 A53.6 36.7 0 0 1 412.60 349.81 L385.30 350.03 A26.3 18.5 0 0 0 359.00 331.77Z" fill="#a99ba2"/><path d="M412.60 349.81 A53.6 36.7 0 0 1 356.98 386.94 L358.01 368.75 A26.3 18.5 0 0 0 385.30 350.03Z" fill="#5a1236"/><path d="M356.98 386.94 A53.6 36.7 0 0 1 306.23 343.84 L333.11 347.03 A26.3 18.5 0 0 0 358.01 368.75Z" fill="#893f66"/><path d="M306.23 343.84 A53.6 36.7 0 0 1 359.00 313.57 L359.00 331.77 A26.3 18.5 0 0 0 333.11 347.03Z" fill="#a58396"/><path d="M359.00 313.05 A53.6 36.7 0 0 1 412.60 349.29 L385.30 349.52 A26.3 18.5 0 0 0 359.00 331.25Z" fill="#a99ba2"/><path d="M412.60 349.29 A53.6 36.7 0 0 1 356.98 386.42 L358.01 368.24 A26.3 18.5 0 0 0 385.30 349.52Z" fill="#5a1236"/><path d="M356.98 386.42 A53.6 36.7 0 0 1 306.23 343.33 L333.11 346.51 A26.3 18.5 0 0 0 358.01 368.24Z" fill="#893f66"/><path d="M306.23 343.33 A53.6 36.7 0 0 1 359.00 313.05 L359.00 331.25 A26.3 18.5 0 0 0 333.11 346.51Z" fill="#a58396"/><path d="M359.00 312.53 A53.6 36.7 0 0 1 412.60 348.77 L385.30 349.00 A26.3 18.5 0 0 0 359.00 330.73Z" fill="#a99ba2"/><path d="M412.60 348.77 A53.6 36.7 0 0 1 356.98 385.91 L358.01 367.72 A26.3 18.5 0 0 0 385.30 349.00Z" fill="#5a1236"/><path d="M356.98 385.91 A53.6 36.7 0 0 1 306.23 342.81 L333.11 346.00 A26.3 18.5 0 0 0 358.01 367.72Z" fill="#893f66"/><path d="M306.23 342.81 A53.6 36.7 0 0 1 359.00 312.53 L359.00 330.73 A26.3 18.5 0 0 0 333.11 346.00Z" fill="#a58396"/><path d="M359.00 312.02 A53.6 36.7 0 0 1 412.60 348.26 L385.30 348.48 A26.3 18.5 0 0 0 359.00 330.22Z" fill="#a99ba2"/><path d="M412.60 348.26 A53.6 36.7 0 0 1 356.98 385.39 L358.01 367.20 A26.3 18.5 0 0 0 385.30 348.48Z" fill="#5a1236"/><path d="M356.98 385.39 A53.6 36.7 0 0 1 306.23 342.29 L333.11 345.48 A26.3 18.5 0 0 0 358.01 367.20Z" fill="#893f66"/><path d="M306.23 342.29 A53.6 36.7 0 0 1 359.00 312.02 L359.00 330.22 A26.3 18.5 0 0 0 333.11 345.48Z" fill="#a58396"/><path d="M359.00 311.50 A53.6 36.7 0 0 1 412.60 347.74 L385.30 347.97 A26.3 18.5 0 0 0 359.00 329.70Z" fill="#a99ba2"/><path d="M412.60 347.74 A53.6 36.7 0 0 1 356.98 384.87 L358.01 366.69 A26.3 18.5 0 0 0 385.30 347.97Z" fill="#5a1236"/><path d="M356.98 384.87 A53.6 36.7 0 0 1 306.23 341.78 L333.11 344.96 A26.3 18.5 0 0 0 358.01 366.69Z" fill="#893f66"/><path d="M306.23 341.78 A53.6 36.7 0 0 1 359.00 311.50 L359.00 329.70 A26.3 18.5 0 0 0 333.11 344.96Z" fill="#a58396"/><path d="M359.00 310.98 A53.6 36.7 0 0 1 412.60 347.22 L385.30 347.45 A26.3 18.5 0 0 0 359.00 329.18Z" fill="#a99ba2"/><path d="M412.60 347.22 A53.6 36.7 0 0 1 356.98 384.36 L358.01 366.17 A26.3 18.5 0 0 0 385.30 347.45Z" fill="#5a1236"/><path d="M356.98 384.36 A53.6 36.7 0 0 1 306.23 341.26 L333.11 344.45 A26.3 18.5 0 0 0 358.01 366.17Z" fill="#893f66"/><path d="M306.23 341.26 A53.6 36.7 0 0 1 359.00 310.98 L359.00 329.18 A26.3 18.5 0 0 0 333.11 344.45Z" fill="#a58396"/><path d="M359.00 310.47 A53.6 36.7 0 0 1 412.60 346.71 L385.30 346.93 A26.3 18.5 0 0 0 359.00 328.67Z" fill="#a99ba2"/><path d="M412.60 346.71 A53.6 36.7 0 0 1 356.98 383.84 L358.01 365.65 A26.3 18.5 0 0 0 385.30 346.93Z" fill="#5a1236"/><path d="M356.98 383.84 A53.6 36.7 0 0 1 306.23 340.74 L333.11 343.93 A26.3 18.5 0 0 0 358.01 365.65Z" fill="#893f66"/><path d="M306.23 340.74 A53.6 36.7 0 0 1 359.00 310.47 L359.00 328.67 A26.3 18.5 0 0 0 333.11 343.93Z" fill="#a58396"/><path d="M359.00 309.95 A53.6 36.7 0 0 1 412.60 346.19 L385.30 346.42 A26.3 18.5 0 0 0 359.00 328.15Z" fill="#a99ba2"/><path d="M412.60 346.19 A53.6 36.7 0 0 1 356.98 383.32 L358.01 365.14 A26.3 18.5 0 0 0 385.30 346.42Z" fill="#5a1236"/><path d="M356.98 383.32 A53.6 36.7 0 0 1 306.23 340.23 L333.11 343.41 A26.3 18.5 0 0 0 358.01 365.14Z" fill="#893f66"/><path d="M306.23 340.23 A53.6 36.7 0 0 1 359.00 309.95 L359.00 328.15 A26.3 18.5 0 0 0 333.11 343.41Z" fill="#a58396"/><path d="M359.00 309.43 A53.6 36.7 0 0 1 412.60 345.67 L385.30 345.90 A26.3 18.5 0 0 0 359.00 327.63Z" fill="#a99ba2"/><path d="M412.60 345.67 A53.6 36.7 0 0 1 356.98 382.81 L358.01 364.62 A26.3 18.5 0 0 0 385.30 345.90Z" fill="#5a1236"/><path d="M356.98 382.81 A53.6 36.7 0 0 1 306.23 339.71 L333.11 342.90 A26.3 18.5 0 0 0 358.01 364.62Z" fill="#893f66"/><path d="M306.23 339.71 A53.6 36.7 0 0 1 359.00 309.43 L359.00 327.63 A26.3 18.5 0 0 0 333.11 342.90Z" fill="#a58396"/><path d="M359.00 308.92 A53.6 36.7 0 0 1 412.60 345.16 L385.30 345.38 A26.3 18.5 0 0 0 359.00 327.12Z" fill="#a99ba2"/><path d="M412.60 345.16 A53.6 36.7 0 0 1 356.98 382.29 L358.01 364.10 A26.3 18.5 0 0 0 385.30 345.38Z" fill="#5a1236"/><path d="M356.98 382.29 A53.6 36.7 0 0 1 306.23 339.19 L333.11 342.38 A26.3 18.5 0 0 0 358.01 364.10Z" fill="#893f66"/><path d="M306.23 339.19 A53.6 36.7 0 0 1 359.00 308.92 L359.00 327.12 A26.3 18.5 0 0 0 333.11 342.38Z" fill="#a58396"/><path d="M359.00 308.40 A53.6 36.7 0 0 1 412.60 344.64 L385.30 344.87 A26.3 18.5 0 0 0 359.00 326.60Z" fill="#a99ba2"/><path d="M412.60 344.64 A53.6 36.7 0 0 1 356.98 381.77 L358.01 363.59 A26.3 18.5 0 0 0 385.30 344.87Z" fill="#5a1236"/><path d="M356.98 381.77 A53.6 36.7 0 0 1 306.23 338.68 L333.11 341.86 A26.3 18.5 0 0 0 358.01 363.59Z" fill="#893f66"/><path d="M306.23 338.68 A53.6 36.7 0 0 1 359.00 308.40 L359.00 326.60 A26.3 18.5 0 0 0 333.11 341.86Z" fill="#a58396"/><path d="M359.00 307.88 A53.6 36.7 0 0 1 412.60 344.12 L385.30 344.35 A26.3 18.5 0 0 0 359.00 326.08Z" fill="#a99ba2"/><path d="M412.60 344.12 A53.6 36.7 0 0 1 356.98 381.26 L358.01 363.07 A26.3 18.5 0 0 0 385.30 344.35Z" fill="#5a1236"/><path d="M356.98 381.26 A53.6 36.7 0 0 1 306.23 338.16 L333.11 341.35 A26.3 18.5 0 0 0 358.01 363.07Z" fill="#893f66"/><path d="M306.23 338.16 A53.6 36.7 0 0 1 359.00 307.88 L359.00 326.08 A26.3 18.5 0 0 0 333.11 341.35Z" fill="#a58396"/><path d="M359.00 307.37 A53.6 36.7 0 0 1 412.60 343.61 L385.30 343.83 A26.3 18.5 0 0 0 359.00 325.57Z" fill="#a99ba2"/><path d="M412.60 343.61 A53.6 36.7 0 0 1 356.98 380.74 L358.01 362.55 A26.3 18.5 0 0 0 385.30 343.83Z" fill="#5a1236"/><path d="M356.98 380.74 A53.6 36.7 0 0 1 306.23 337.64 L333.11 340.83 A26.3 18.5 0 0 0 358.01 362.55Z" fill="#893f66"/><path d="M306.23 337.64 A53.6 36.7 0 0 1 359.00 307.37 L359.00 325.57 A26.3 18.5 0 0 0 333.11 340.83Z" fill="#a58396"/><path d="M359.00 306.85 A53.6 36.7 0 0 1 412.60 343.09 L385.30 343.32 A26.3 18.5 0 0 0 359.00 325.05Z" fill="#a99ba2"/><path d="M412.60 343.09 A53.6 36.7 0 0 1 356.98 380.22 L358.01 362.04 A26.3 18.5 0 0 0 385.30 343.32Z" fill="#5a1236"/><path d="M356.98 380.22 A53.6 36.7 0 0 1 306.23 337.13 L333.11 340.31 A26.3 18.5 0 0 0 358.01 362.04Z" fill="#893f66"/><path d="M306.23 337.13 A53.6 36.7 0 0 1 359.00 306.85 L359.00 325.05 A26.3 18.5 0 0 0 333.11 340.31Z" fill="#a58396"/><path d="M359.00 306.33 A53.6 36.7 0 0 1 412.60 342.57 L385.30 342.80 A26.3 18.5 0 0 0 359.00 324.53Z" fill="#a99ba2"/><path d="M412.60 342.57 A53.6 36.7 0 0 1 356.98 379.71 L358.01 361.52 A26.3 18.5 0 0 0 385.30 342.80Z" fill="#5a1236"/><path d="M356.98 379.71 A53.6 36.7 0 0 1 306.23 336.61 L333.11 339.80 A26.3 18.5 0 0 0 358.01 361.52Z" fill="#893f66"/><path d="M306.23 336.61 A53.6 36.7 0 0 1 359.00 306.33 L359.00 324.53 A26.3 18.5 0 0 0 333.11 339.80Z" fill="#a58396"/><path d="M359.00 305.82 A53.6 36.7 0 0 1 412.60 342.06 L385.30 342.28 A26.3 18.5 0 0 0 359.00 324.02Z" fill="#a99ba2"/><path d="M412.60 342.06 A53.6 36.7 0 0 1 356.98 379.19 L358.01 361.00 A26.3 18.5 0 0 0 385.30 342.28Z" fill="#5a1236"/><path d="M356.98 379.19 A53.6 36.7 0 0 1 306.23 336.09 L333.11 339.28 A26.3 18.5 0 0 0 358.01 361.00Z" fill="#893f66"/><path d="M306.23 336.09 A53.6 36.7 0 0 1 359.00 305.82 L359.00 324.02 A26.3 18.5 0 0 0 333.11 339.28Z" fill="#a58396"/><path d="M359.00 305.30 A53.6 36.7 0 0 1 412.60 341.54 L385.30 341.77 A26.3 18.5 0 0 0 359.00 323.50Z" fill="#edd3e1"/><path d="M412.60 341.54 A53.6 36.7 0 0 1 356.98 378.67 L358.01 360.49 A26.3 18.5 0 0 0 385.30 341.77Z" fill="#7b1b4b"/><path d="M356.98 378.67 A53.6 36.7 0 0 1 306.23 335.58 L333.11 338.76 A26.3 18.5 0 0 0 358.01 360.49Z" fill="#b3588a"/><path d="M306.23 335.58 A53.6 36.7 0 0 1 359.00 305.30 L359.00 323.50 A26.3 18.5 0 0 0 333.11 338.76Z" fill="#d8a3c2"/></svg>
<div class="t" style="left:325.20px;top:315px;font-size:10.5px;color:#3a1228;font-weight:bold;">111</div>
<div class="t" style="left:379.20px;top:316px;font-size:10.5px;color:#ffffff;font-weight:bold;">124</div>
<div class="t" style="left:318.80px;top:355px;font-size:10.5px;color:#3a1228;font-weight:normal;-webkit-text-stroke:0.25px #3a1228;">136</div>
<div class="t" style="left:378.00px;top:357px;font-size:10.5px;color:#ffffff;font-weight:bold;">129</div>
<svg class="a" style="left:0;top:0" width="1280" height="648" viewBox="0 0 1280 648"><circle cx="278.8" cy="412" r="4.9" fill="#edd3e1"/><circle cx="330.9" cy="412" r="4.9" fill="#7b1b4b"/><circle cx="398.2" cy="412" r="4.9" fill="#b3588a"/><circle cx="345.2" cy="424.9" r="4.9" fill="#d8a3c2"/></svg>
<div class="t" style="left:291.00px;top:407px;font-size:9.8px;color:#1d1d1d;font-weight:bold;">High</div>
<div class="t" style="left:343.00px;top:407px;font-size:9.8px;color:#1d1d1d;font-weight:bold;">Medium</div>
<div class="t" style="left:410.50px;top:407px;font-size:9.8px;color:#1d1d1d;font-weight:bold;">Critical</div>
<div class="t" style="left:357.80px;top:420px;font-size:9.8px;color:#1d1d1d;font-weight:bold;">Low</div>
<div class="t" style="left:479.40px;top:277px;font-size:9.85px;color:#1d1d1d;font-weight:bold;">Total Incidents Reported by Location</div>
<svg class="a" style="left:0;top:0" width="1280" height="648" viewBox="0 0 1280 648"><rect x="553.3" y="302.60" width="80.10" height="17.7" rx="1.8" fill="#7a1c4a"/><rect x="553.3" y="329.93" width="77.70" height="17.7" rx="1.8" fill="#7a1c4a"/><rect x="553.3" y="357.26" width="84.91" height="17.7" rx="1.8" fill="#7a1c4a"/><rect x="553.3" y="384.59" width="71.29" height="17.7" rx="1.8" fill="#7a1c4a"/><rect x="553.3" y="411.92" width="86.51" height="17.7" rx="1.8" fill="#7a1c4a"/></svg>
<div class="t" style="left:148.20px;width:400px;text-align:right;top:308px;font-size:8.2px;color:#1d1d1d;font-weight:bold;">Warehouse A</div>
<div class="t" style="left:230.20px;width:400px;text-align:right;top:307px;font-size:10px;color:#ffffff;font-weight:bold;">100</div>
<div class="t" style="left:148.20px;width:400px;text-align:right;top:335px;font-size:8.2px;color:#1d1d1d;font-weight:bold;">Factory 1</div>
<div class="t" style="left:227.80px;width:400px;text-align:right;top:334px;font-size:10px;color:#ffffff;font-weight:bold;">97</div>
<div class="t" style="left:148.20px;width:400px;text-align:right;top:363px;font-size:8.2px;color:#1d1d1d;font-weight:bold;">Office HQ</div>
<div class="t" style="left:235.01px;width:400px;text-align:right;top:361px;font-size:10px;color:#ffffff;font-weight:bold;">106</div>
<div class="t" style="left:148.20px;width:400px;text-align:right;top:390px;font-size:8.2px;color:#1d1d1d;font-weight:bold;">Factory 2</div>
<div class="t" style="left:221.39px;width:400px;text-align:right;top:389px;font-size:10px;color:#ffffff;font-weight:bold;">89</div>
<div class="t" style="left:148.20px;width:400px;text-align:right;top:417px;font-size:8.2px;color:#1d1d1d;font-weight:bold;">Warehouse B</div>
<div class="t" style="left:236.61px;width:400px;text-align:right;top:416px;font-size:10px;color:#ffffff;font-weight:bold;">108</div>
<div class="t" style="left:676.40px;top:213px;font-size:9.85px;color:#1d1d1d;font-weight:bold;">Total Incidents Resolved Vs Pending Incidents</div>
<div class="t" style="left:584.80px;width:400px;text-align:center;top:223px;font-size:9.85px;color:#1d1d1d;font-weight:bold;">by Incident Type</div>
<svg class="a" style="left:0;top:0" width="1280" height="648" viewBox="0 0 1280 648"><path d="M743.3 265.20000000000005 H836.4999999999999 L839.0999999999999 267.00000000000006 H743.8Z" fill="#a8281e"/><path d="M836.4999999999999 256.6 L839.0999999999999 258.40000000000003 V267.00000000000006 L836.4999999999999 265.20000000000005Z" fill="#c8392a"/><rect x="743.3" y="256.6" width="93.20" height="8.6" fill="#e8452f"/><path d="M743.3 255.8 H847.9499999999999 L850.55 257.6 H743.8Z" fill="#7c4868"/><path d="M847.9499999999999 247.3 L850.55 249.10000000000002 V257.6 L847.9499999999999 255.8Z" fill="#a86591"/><rect x="743.3" y="247.3" width="104.65" height="8.5" fill="#c27aa7"/><path d="M743.3 296.8 H800.9499999999999 L803.55 298.6 H743.8Z" fill="#a8281e"/><path d="M800.9499999999999 288.2 L803.55 290.0 V298.6 L800.9499999999999 296.8Z" fill="#c8392a"/><rect x="743.3" y="288.2" width="57.65" height="8.6" fill="#e8452f"/><path d="M743.3 287.4 H851.9 L854.5 289.2 H743.8Z" fill="#7c4868"/><path d="M851.9 278.9 L854.5 280.7 V289.2 L851.9 287.4Z" fill="#a86591"/><rect x="743.3" y="278.9" width="108.60" height="8.5" fill="#c27aa7"/><path d="M743.3 327.1 H808.8499999999999 L811.4499999999999 328.90000000000003 H743.8Z" fill="#a8281e"/><path d="M808.8499999999999 318.5 L811.4499999999999 320.3 V328.90000000000003 L808.8499999999999 327.1Z" fill="#c8392a"/><rect x="743.3" y="318.5" width="65.55" height="8.6" fill="#e8452f"/><path d="M743.3 317.7 H820.3 L822.9 319.5 H743.8Z" fill="#7c4868"/><path d="M820.3 309.2 L822.9 311.0 V319.5 L820.3 317.7Z" fill="#a86591"/><rect x="743.3" y="309.2" width="77.00" height="8.5" fill="#c27aa7"/><path d="M743.3 359.00000000000006 H864.15 L866.75 360.80000000000007 H743.8Z" fill="#a8281e"/><path d="M864.15 350.40000000000003 L866.75 352.20000000000005 V360.80000000000007 L864.15 359.00000000000006Z" fill="#c8392a"/><rect x="743.3" y="350.40000000000003" width="120.85" height="8.6" fill="#e8452f"/><path d="M743.3 349.6 H804.4999999999999 L807.0999999999999 351.40000000000003 H743.8Z" fill="#7c4868"/><path d="M804.4999999999999 341.1 L807.0999999999999 342.90000000000003 V351.40000000000003 L804.4999999999999 349.6Z" fill="#a86591"/><rect x="743.3" y="341.1" width="61.20" height="8.5" fill="#c27aa7"/><path d="M743.3 390.1 H820.6999999999999 L823.3 391.90000000000003 H743.8Z" fill="#a8281e"/><path d="M820.6999999999999 381.5 L823.3 383.3 V391.90000000000003 L820.6999999999999 390.1Z" fill="#c8392a"/><rect x="743.3" y="381.5" width="77.40" height="8.6" fill="#e8452f"/><path d="M743.3 380.7 H840.05 L842.65 382.5 H743.8Z" fill="#7c4868"/><path d="M840.05 372.2 L842.65 374.0 V382.5 L840.05 380.7Z" fill="#a86591"/><rect x="743.3" y="372.2" width="96.75" height="8.5" fill="#c27aa7"/><path d="M743.3 421.90000000000003 H812.8 L815.4 423.70000000000005 H743.8Z" fill="#a8281e"/><path d="M812.8 413.3 L815.4 415.1 V423.70000000000005 L812.8 421.90000000000003Z" fill="#c8392a"/><rect x="743.3" y="413.3" width="69.50" height="8.6" fill="#e8452f"/><path d="M743.3 412.5 H840.05 L842.65 414.3 H743.8Z" fill="#7c4868"/><path d="M840.05 404.0 L842.65 405.8 V414.3 L840.05 412.5Z" fill="#a86591"/><rect x="743.3" y="404.0" width="96.75" height="8.5" fill="#c27aa7"/></svg>
<div class="t" style="left:337.20px;width:400px;text-align:right;top:252px;font-size:8.1px;color:#262626;font-weight:bold;">Fire Hazard</div>
<div class="t" style="left:858.49px;top:246px;font-size:9.9px;color:#bb98b2;font-weight:normal;">27</div>
<div class="t" style="left:337.20px;width:400px;text-align:right;top:284px;font-size:8.1px;color:#262626;font-weight:bold;">Chemical</div>
<div class="t" style="left:862.46px;top:278px;font-size:9.9px;color:#bb98b2;font-weight:normal;">28</div>
<div class="t" style="left:337.20px;width:400px;text-align:right;top:314px;font-size:8.1px;color:#262626;font-weight:bold;">Equipment Failure</div>
<div class="t" style="left:830.70px;top:308px;font-size:9.9px;color:#bb98b2;font-weight:normal;">20</div>
<div class="t" style="left:337.20px;width:400px;text-align:right;top:346px;font-size:8.1px;color:#262626;font-weight:bold;">Electrical</div>
<div class="t" style="left:814.82px;top:340px;font-size:9.9px;color:#bb98b2;font-weight:normal;">16</div>
<div class="t" style="left:337.20px;width:400px;text-align:right;top:377px;font-size:8.1px;color:#262626;font-weight:bold;">Other</div>
<div class="t" style="left:850.55px;top:371px;font-size:9.9px;color:#bb98b2;font-weight:normal;">25</div>
<div class="t" style="left:337.20px;width:400px;text-align:right;top:409px;font-size:8.1px;color:#262626;font-weight:bold;">Slip/Fall</div>
<div class="t" style="left:850.55px;top:403px;font-size:9.9px;color:#bb98b2;font-weight:normal;">25</div>
<div class="t" style="left:967.70px;top:214px;font-size:11.55px;color:#1d1d1d;font-weight:bold;">Average Days to Resolve by Compliance Type</div>
<svg class="a" style="left:0;top:0" width="1280" height="648" viewBox="0 0 1280 648"><path d="M952.80 282.34 C967.82 279.41 997.86 271.57 1027.90 267.69 C1057.94 263.81 1072.94 260.09 1103.00 262.94 C1133.06 265.79 1148.14 279.81 1178.20 281.95 C1208.26 284.09 1238.28 275.30 1253.30 273.63 L1253.3 395.6 L952.8 395.6Z" fill="#d5b9c9"/><line x1="952.8" y1="269.5" x2="952.8" y2="282.3" stroke="#ececec" stroke-width="0.8"/><line x1="1027.9" y1="255.0" x2="1027.9" y2="267.7" stroke="#ececec" stroke-width="0.8"/><line x1="1103.0" y1="250.0" x2="1103.0" y2="262.9" stroke="#ececec" stroke-width="0.8"/><line x1="1178.2" y1="269.5" x2="1178.2" y2="281.9" stroke="#ececec" stroke-width="0.8"/><line x1="1253.3" y1="261.0" x2="1253.3" y2="273.6" stroke="#ececec" stroke-width="0.8"/><path d="M952.80 282.34 C967.82 279.41 997.86 271.57 1027.90 267.69 C1057.94 263.81 1072.94 260.09 1103.00 262.94 C1133.06 265.79 1148.14 279.81 1178.20 281.95 C1208.26 284.09 1238.28 275.30 1253.30 273.63" fill="none" stroke="#6a1e47" stroke-width="1.8"/></svg>
<div class="t" style="left:943.10px;top:260px;font-size:10.0px;color:#8a537c;font-weight:normal;">28.6</div>
<div class="t" style="left:1017.80px;top:245px;font-size:10.0px;color:#8a537c;font-weight:normal;">32.3</div>
<div class="t" style="left:1093.40px;top:240px;font-size:10.0px;color:#8a537c;font-weight:normal;">33.5</div>
<div class="t" style="left:1168.40px;top:260px;font-size:10.0px;color:#8a537c;font-weight:normal;">28.7</div>
<div class="t" style="left:1243.70px;top:251px;font-size:10.0px;color:#8a537c;font-weight:normal;">30.8</div>
<div class="t" style="left:548.40px;width:400px;text-align:right;top:393px;font-size:7.9px;color:#1d1d1d;font-weight:bold;">0</div>
<div class="t" style="left:548.40px;width:400px;text-align:right;top:353px;font-size:7.9px;color:#1d1d1d;font-weight:bold;">10</div>
<div class="t" style="left:548.40px;width:400px;text-align:right;top:313px;font-size:7.9px;color:#1d1d1d;font-weight:bold;">20</div>
<div class="t" style="left:548.40px;width:400px;text-align:right;top:274px;font-size:7.9px;color:#1d1d1d;font-weight:bold;">30</div>
<div class="t" style="left:548.40px;width:400px;text-align:right;top:234px;font-size:7.9px;color:#1d1d1d;font-weight:bold;">40</div>
<div class="t" style="left:752.80px;width:400px;text-align:center;top:401px;font-size:8.2px;color:#222222;font-weight:normal;">PPE Check</div>
<div class="t" style="left:827.90px;width:400px;text-align:center;top:401px;font-size:8.2px;color:#222222;font-weight:normal;">Safety Drill</div>
<div class="t" style="left:903.00px;width:400px;text-align:center;top:401px;font-size:8.2px;color:#222222;font-weight:normal;">Audit</div>
<div class="t" style="left:978.20px;width:400px;text-align:center;top:401px;font-size:8.2px;color:#222222;font-weight:normal;">Training</div>
<div class="t" style="left:162.10px;top:464px;font-size:9.85px;color:#1d1d1d;font-weight:bold;">Total Incidents Reported by Department</div>
<svg class="a" style="left:0;top:0" width="1280" height="648" viewBox="0 0 1280 648"><path d="M99.8 513.86 L111.0 502.26 H155.6 L144.4 513.86Z" fill="#b56b93"/><path d="M144.4 513.86 L155.6 502.26 V599.70 L144.4 611.3Z" fill="#6b2d50"/><rect x="99.8" y="513.86" width="44.6" height="97.44" fill="#a34c7a"/><path d="M168.2 519.54 L179.39999999999998 507.94 H223.99999999999997 L212.79999999999998 519.54Z" fill="#b56b93"/><path d="M212.79999999999998 519.54 L223.99999999999997 507.94 V599.70 L212.79999999999998 611.3Z" fill="#6b2d50"/><rect x="168.2" y="519.54" width="44.6" height="91.76" fill="#a34c7a"/><path d="M236.3 524.27 L247.5 512.67 H292.1 L280.90000000000003 524.27Z" fill="#b56b93"/><path d="M280.90000000000003 524.27 L292.1 512.67 V599.70 L280.90000000000003 611.3Z" fill="#6b2d50"/><rect x="236.3" y="524.27" width="44.6" height="87.03" fill="#a34c7a"/><path d="M305.2 507.24 L316.4 495.64 H361.0 L349.8 507.24Z" fill="#b56b93"/><path d="M349.8 507.24 L361.0 495.64 V599.70 L349.8 611.3Z" fill="#6b2d50"/><rect x="305.2" y="507.24" width="44.6" height="104.06" fill="#a34c7a"/><path d="M373.5 518.59 L384.7 506.99 H429.3 L418.1 518.59Z" fill="#b56b93"/><path d="M418.1 518.59 L429.3 506.99 V599.70 L418.1 611.3Z" fill="#6b2d50"/><rect x="373.5" y="518.59" width="44.6" height="92.71" fill="#a34c7a"/></svg>
<div class="t" style="left:-77.90px;width:400px;text-align:center;top:518px;font-size:10.2px;color:#f3e3ec;font-weight:bold;">103.0</div>
<div class="t" style="left:-77.90px;width:400px;text-align:center;top:620px;font-size:8.2px;color:#1d1d1d;font-weight:bold;">Maintenance</div>
<div class="t" style="left:-9.50px;width:400px;text-align:center;top:524px;font-size:10.2px;color:#f3e3ec;font-weight:bold;">97.0</div>
<div class="t" style="left:-9.50px;width:400px;text-align:center;top:620px;font-size:8.2px;color:#1d1d1d;font-weight:bold;">Logistics</div>
<div class="t" style="left:58.60px;width:400px;text-align:center;top:528px;font-size:10.2px;color:#f3e3ec;font-weight:bold;">92.0</div>
<div class="t" style="left:58.60px;width:400px;text-align:center;top:620px;font-size:8.2px;color:#1d1d1d;font-weight:bold;">Security</div>
<div class="t" style="left:127.50px;width:400px;text-align:center;top:511px;font-size:10.2px;color:#f3e3ec;font-weight:bold;">110.0</div>
<div class="t" style="left:127.50px;width:400px;text-align:center;top:620px;font-size:8.2px;color:#1d1d1d;font-weight:bold;">Manufacturing</div>
<div class="t" style="left:195.80px;width:400px;text-align:center;top:523px;font-size:10.2px;color:#f3e3ec;font-weight:bold;">98.0</div>
<div class="t" style="left:195.80px;width:400px;text-align:center;top:620px;font-size:8.2px;color:#1d1d1d;font-weight:bold;">Admin</div>
<div class="t" style="left:-323.10px;width:400px;text-align:right;top:478px;font-size:8.1px;color:#1d1d1d;font-weight:bold;">125</div>
<div class="t" style="left:-323.10px;width:400px;text-align:right;top:502px;font-size:8.1px;color:#1d1d1d;font-weight:bold;">100</div>
<div class="t" style="left:-323.10px;width:400px;text-align:right;top:526px;font-size:8.1px;color:#1d1d1d;font-weight:bold;">75</div>
<div class="t" style="left:-323.10px;width:400px;text-align:right;top:549px;font-size:8.1px;color:#1d1d1d;font-weight:bold;">50</div>
<div class="t" style="left:-323.10px;width:400px;text-align:right;top:573px;font-size:8.1px;color:#1d1d1d;font-weight:bold;">25</div>
<div class="t" style="left:-323.10px;width:400px;text-align:right;top:596px;font-size:8.1px;color:#1d1d1d;font-weight:bold;">0</div>
<div class="t" style="left:777.70px;top:463px;font-size:11.5px;color:#1d1d1d;font-weight:bold;">Total Incidents Reported by Month</div>
<svg class="a" style="left:0;top:0" width="1280" height="648" viewBox="0 0 1280 648"><path d="M542.10 494.30 C565.42 493.08 612.05 486.25 658.68 488.20 C705.31 490.15 728.63 498.94 775.26 504.06 C821.89 509.18 845.21 512.36 891.84 513.82 C938.47 515.28 961.79 512.36 1008.42 511.38 C1055.05 510.40 1078.37 491.62 1125.00 508.94 C1171.63 526.26 1218.26 580.19 1241.58 598.00 L1241.58 604.1 L542.1 604.1Z" fill="#d5b9c9"/><line x1="891.8" y1="501.0" x2="891.8" y2="513.8" stroke="#ececec" stroke-width="0.8"/><line x1="1008.4" y1="499.4" x2="1008.4" y2="511.4" stroke="#ececec" stroke-width="0.8"/><line x1="1125.0" y1="496.3" x2="1125.0" y2="508.9" stroke="#ececec" stroke-width="0.8"/><line x1="1241.6" y1="585.6" x2="1241.6" y2="598.0" stroke="#ececec" stroke-width="0.8"/><path d="M542.10 494.30 C565.42 493.08 612.05 486.25 658.68 488.20 C705.31 490.15 728.63 498.94 775.26 504.06 C821.89 509.18 845.21 512.36 891.84 513.82 C938.47 515.28 961.79 512.36 1008.42 511.38 C1055.05 510.40 1078.37 491.62 1125.00 508.94 C1171.63 526.26 1218.26 580.19 1241.58 598.00" fill="none" stroke="#6a1e47" stroke-width="1.8"/></svg>
<div class="t" style="left:887.00px;top:491px;font-size:9.8px;color:#8a537c;font-weight:normal;">74</div>
<div class="t" style="left:1002.90px;top:489px;font-size:9.8px;color:#8a537c;font-weight:normal;">76</div>
<div class="t" style="left:1120.00px;top:486px;font-size:9.8px;color:#8a537c;font-weight:normal;">78</div>
<div class="t" style="left:1239.40px;top:576px;font-size:9.8px;color:#8a537c;font-weight:normal;">5</div>
<div class="t" style="left:137.60px;width:400px;text-align:right;top:601px;font-size:7.9px;color:#1d1d1d;font-weight:bold;">0</div>
<div class="t" style="left:137.60px;width:400px;text-align:right;top:570px;font-size:7.9px;color:#1d1d1d;font-weight:bold;">25</div>
<div class="t" style="left:137.60px;width:400px;text-align:right;top:540px;font-size:7.9px;color:#1d1d1d;font-weight:bold;">50</div>
<div class="t" style="left:137.60px;width:400px;text-align:right;top:509px;font-size:7.9px;color:#1d1d1d;font-weight:bold;">75</div>
<div class="t" style="left:137.60px;width:400px;text-align:right;top:479px;font-size:7.9px;color:#1d1d1d;font-weight:bold;">100</div>
<div class="t" style="left:342.10px;width:400px;text-align:center;top:609px;font-size:8.2px;color:#222222;font-weight:normal;">Apr</div>
<div class="t" style="left:458.68px;width:400px;text-align:center;top:609px;font-size:8.2px;color:#222222;font-weight:normal;">May</div>
<div class="t" style="left:575.26px;width:400px;text-align:center;top:609px;font-size:8.2px;color:#222222;font-weight:normal;">Jun</div>
<div class="t" style="left:691.84px;width:400px;text-align:center;top:609px;font-size:8.2px;color:#222222;font-weight:normal;">Feb</div>
<div class="t" style="left:808.42px;width:400px;text-align:center;top:609px;font-size:8.2px;color:#222222;font-weight:normal;">Jan</div>
<div class="t" style="left:925.00px;width:400px;text-align:center;top:609px;font-size:8.2px;color:#222222;font-weight:normal;">Mar</div>
<div class="t" style="left:1041.58px;width:400px;text-align:center;top:609px;font-size:8.2px;color:#222222;font-weight:normal;">Dec</div>
<div class="a" style="left:0;top:640px;width:1280px;height:8px;background:#f8f9fa;border-top:1px solid #e3e3e3"></div>
<div class="a" style="left:0;top:640px;width:38px;height:8px;background:#f1f3f4"></div>
<div class="a" style="left:40px;top:641.6px;width:938px;height:7px;background:#dadce0;border-radius:4px 4px 0 0"></div>
</body></html>
